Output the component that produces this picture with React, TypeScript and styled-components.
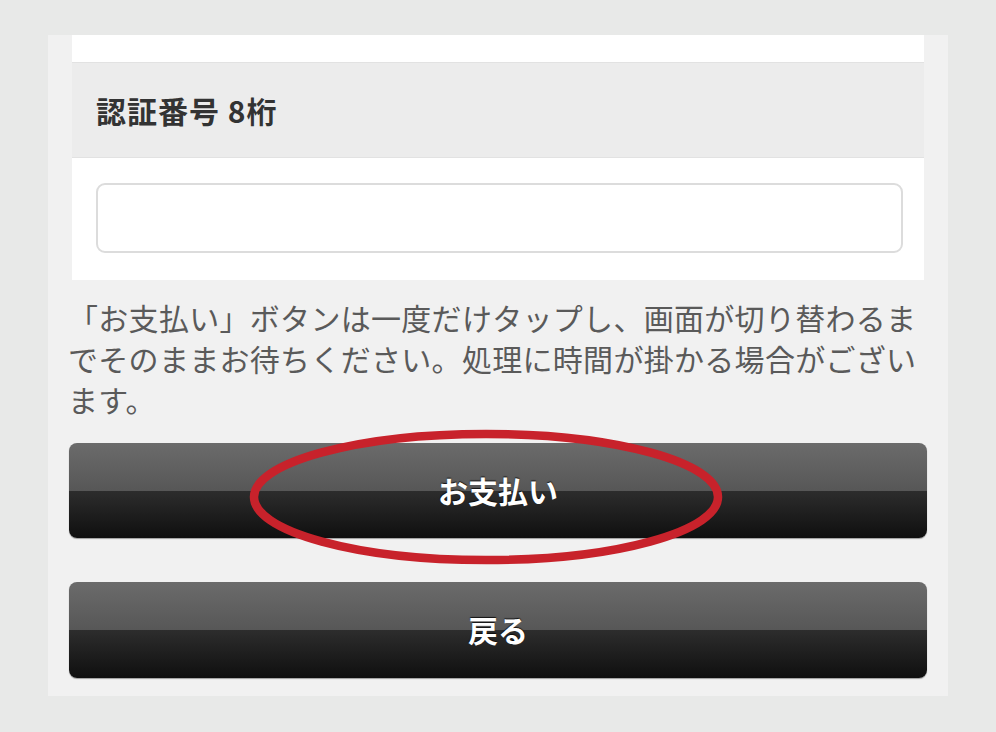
import React from "react";
import styled, { createGlobalStyle } from "styled-components";

const Global = createGlobalStyle`
  html, body {
    margin: 0;
    padding: 0;
    background: #e8e9e8;
  }
  body {
    font-family: "Noto Sans CJK JP", "Noto Sans", sans-serif;
  }
`;

const Page = styled.div`
  width: 996px;
  height: 732px;
  box-sizing: border-box;
  padding: 35px 48px 36px 48px;
  display: flex;
`;

const Panel = styled.div`
  position: relative;
  flex: 1;
  background: #f1f1f1;
  padding: 0 21px 18px 21px;
  display: flex;
  flex-direction: column;
`;

const Card = styled.div`
  margin: 0 3px 0 3px;
  background: #ffffff;
  display: flex;
  flex-direction: column;
`;

const TopStrip = styled.div`
  height: 27px;
  background: #ffffff;
`;

const FieldHeader = styled.div`
  height: 94px;
  border-top: 1px solid #e2e2e2;
  border-bottom: 1px solid #e2e2e2;
  background: #ececec;
  display: flex;
  align-items: center;
  padding-left: 24px;
  font-size: 30px;
  font-weight: 700;
  color: #333333;
  letter-spacing: 1px;
`;

const FieldBody = styled.div`
  padding: 25px 21px 27px 24px;
`;

const Input = styled.input`
  display: block;
  width: 100%;
  height: 70px;
  box-sizing: border-box;
  border: 2px solid #dcdcdc;
  border-radius: 9px;
  background: #ffffff;
  outline: none;
  font-size: 28px;
`;

const Notice = styled.p`
  margin: 17px 0 23px -1px;
  font-size: 30px;
  line-height: 41px;
  letter-spacing: 0.3px;
  color: #5a5a5a;
  font-weight: 400;
`;

const Actions = styled.div`
  display: flex;
  flex-direction: column;
  gap: 44px;
`;

const DarkButton = styled.button<{ $h: number }>`
  height: ${(p) => p.$h}px;
  width: 100%;
  border: none;
  border-radius: 8px;
  background: linear-gradient(
    to bottom,
    #6b6b6b 0%,
    #575757 50%,
    #2d2d2d 50%,
    #0f0f0f 100%
  );
  box-shadow: 0 1px 1px rgba(0, 0, 0, 0.35);
  color: #ffffff;
  font-family: "Noto Sans CJK JP", "Noto Sans", sans-serif;
  font-size: 30px;
  font-weight: 700;
  text-shadow: 0 -1px 1px rgba(0, 0, 0, 0.8);
  display: flex;
  align-items: center;
  justify-content: center;
  padding: 0 0 2px 0;
  cursor: pointer;
`;

const Highlight = styled.svg`
  position: absolute;
  left: 197px;
  top: 390px;
  width: 482px;
  height: 144px;
  pointer-events: none;
  overflow: visible;
`;

export default function App() {
  return (
    <>
      <Global />
      <Page>
        <Panel>
          <Card>
            <TopStrip />
            <FieldHeader>認証番号 8桁</FieldHeader>
            <FieldBody>
              <Input type="text" />
            </FieldBody>
          </Card>
          <Notice>
            「お支払い」ボタンは一度だけタップし、画面が切り替わるまでそのままお待ちください。処理に時間が掛かる場合がございます。
          </Notice>
          <Actions>
            <DarkButton $h={95}>お支払い</DarkButton>
            <DarkButton $h={96}>戻る</DarkButton>
          </Actions>
          <Highlight viewBox="0 0 482 144">
            <ellipse
              cx="241"
              cy="72"
              rx="232"
              ry="63"
              fill="none"
              stroke="#c8222b"
              strokeWidth="8.5"
            />
          </Highlight>
        </Panel>
      </Page>
    </>
  );
}
